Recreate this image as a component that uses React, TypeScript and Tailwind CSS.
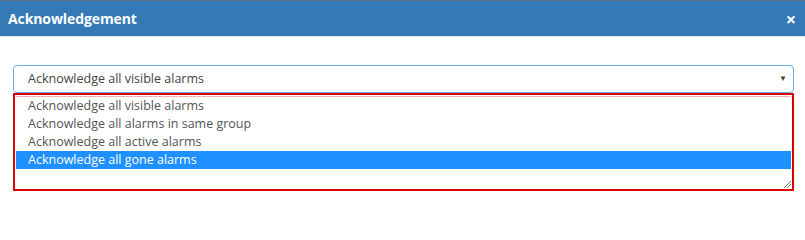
import React from 'react';

const options = [
    'Acknowledge all visible alarms',
    'Acknowledge all alarms in same group',
    'Acknowledge all active alarms',
    'Acknowledge all gone alarms',
];

const App: React.FC = () => {
    const selected = 3;
    return (
        <div className="w-[805px] h-[215px] bg-white overflow-hidden font-['Open_Sans','Noto_Sans',sans-serif]">
            <div className="border-t border-[#5a6e86] bg-[#337ab7] h-[37px] flex items-center justify-between pl-[8px] pr-[9px] border-b border-b-[#dbe8f4]">
                <span className="text-white font-bold text-[14px] tracking-[-0.1px]">Acknowledgement</span>
                <span className="text-white font-bold text-[18px] leading-none">×</span>
            </div>
            <div className="pl-[13px] pr-[11px] pt-[28px]">
                <div className="h-[28px] border border-[#66afe9] rounded-[4px] flex items-center justify-between pl-[14px] pr-[6px] text-[12.5px] text-[#444]">
                    <span>{options[0]}</span>
                    <span className="text-[8px] text-[#444] mt-[-2px]">▼</span>
                </div>
                <div className="relative h-[98px] border-2 border-[#e00000] pt-[1px] px-[1px]">
                    <div className="flex flex-col text-[12.5px] text-[#555] border-t border-[#f4b0b0]">
                        {options.map((o, i) => (
                            <div
                                key={o}
                                className={
                                    i === selected
                                        ? 'h-[18px] leading-[18px] pl-[12px] bg-[#1e90ff] text-white'
                                        : 'h-[18px] leading-[18px] pl-[12px]'
                                }
                            >
                                {o}
                            </div>
                        ))}
                    </div>
                    <svg className="absolute right-0 bottom-0" width="10" height="10" viewBox="0 0 10 10">
                        <line x1="9" y1="2" x2="2" y2="9" stroke="#777" strokeWidth="1" />
                        <line x1="9" y1="5" x2="5" y2="9" stroke="#777" strokeWidth="1" />
                    </svg>
                </div>
            </div>
        </div>
    );
};

export default App;
